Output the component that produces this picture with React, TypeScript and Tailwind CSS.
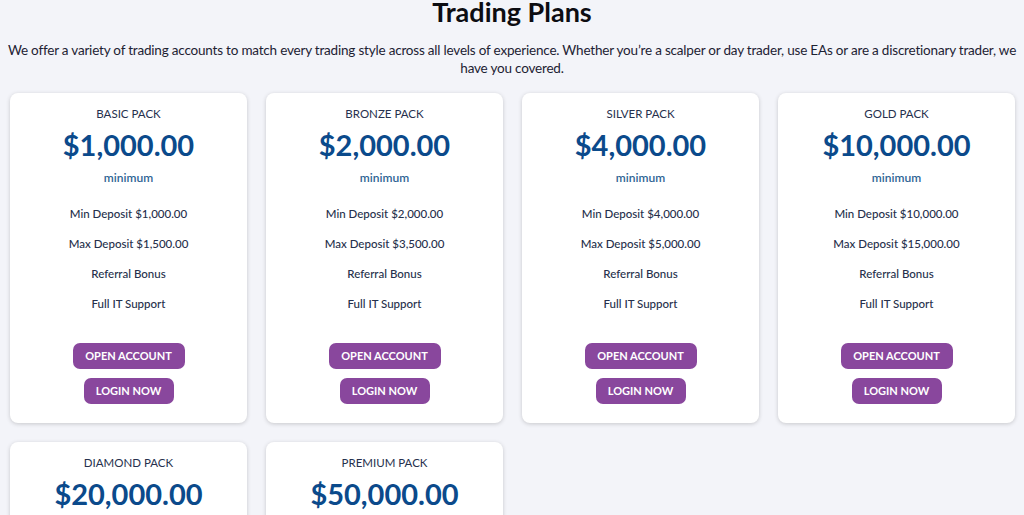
const plans = [
  { name: 'BASIC PACK', price: '$1,000.00', min: '$1,000.00', max: '$1,500.00' },
  { name: 'BRONZE PACK', price: '$2,000.00', min: '$2,000.00', max: '$3,500.00' },
  { name: 'SILVER PACK', price: '$4,000.00', min: '$4,000.00', max: '$5,000.00' },
  { name: 'GOLD PACK', price: '$10,000.00', min: '$10,000.00', max: '$15,000.00' },
  { name: 'DIAMOND PACK', price: '$20,000.00', min: '$20,000.00', max: '$30,000.00' },
  { name: 'PREMIUM PACK', price: '$50,000.00', min: '$50,000.00', max: '$100,000.00' },
];

function PlanCard({ plan }: { plan: (typeof plans)[number] }) {
  return (
    <div className="flex flex-col items-center rounded-lg bg-white pt-[13px] pb-[19px] shadow-[0_1px_4px_rgba(0,0,0,0.18)]">
      <h3 className="text-[11.5px] leading-[16px] text-[#26304d]">{plan.name}</h3>
      <p className="mt-[4px] text-[29px] font-bold leading-[38px] text-[#0b4a8b]">{plan.price}</p>
      <p className="mt-[6px] text-[12px] font-semibold leading-[16px] text-[#2e6494]">minimum</p>
      <ul className="mt-[20px] flex flex-col items-center gap-[14px] text-[11.5px] font-medium leading-[16px] text-[#26304b]">
        <li>Min Deposit {plan.min}</li>
        <li>Max Deposit {plan.max}</li>
        <li>Referral Bonus</li>
        <li>Full IT Support</li>
      </ul>
      <div className="mt-[31px] flex flex-col items-center gap-[9px]">
        <button className="h-[26px] w-[112px] rounded-[7px] bg-[#89479d] text-[11px] font-bold text-white">
          OPEN ACCOUNT
        </button>
        <button className="h-[26px] w-[90px] rounded-[7px] bg-[#89479d] text-[11px] font-bold text-white">
          LOGIN NOW
        </button>
      </div>
    </div>
  );
}

export default function App() {
  return (
    <div className="min-h-screen bg-[#f3f4f9] font-['Lato',sans-serif]">
      <h1 className="-mt-[5px] text-center text-[27px] font-bold leading-[34px] text-[#0d0d12]">Trading Plans</h1>
      <p className="mt-[12px] px-[4px] text-center text-[13.5px] leading-[18px] tracking-[-0.2px] text-[#1d2233]">
        We offer a variety of trading accounts to match every trading style across all levels of experience. Whether you’re a scalper or day trader, use EAs or are a discretionary trader, we have you covered.
      </p>
      <div className="mt-[16px] grid grid-cols-4 gap-[19px] pl-[10px] pr-[9px]">
        {plans.map((p) => (
          <PlanCard key={p.name} plan={p} />
        ))}
      </div>
    </div>
  );
}
